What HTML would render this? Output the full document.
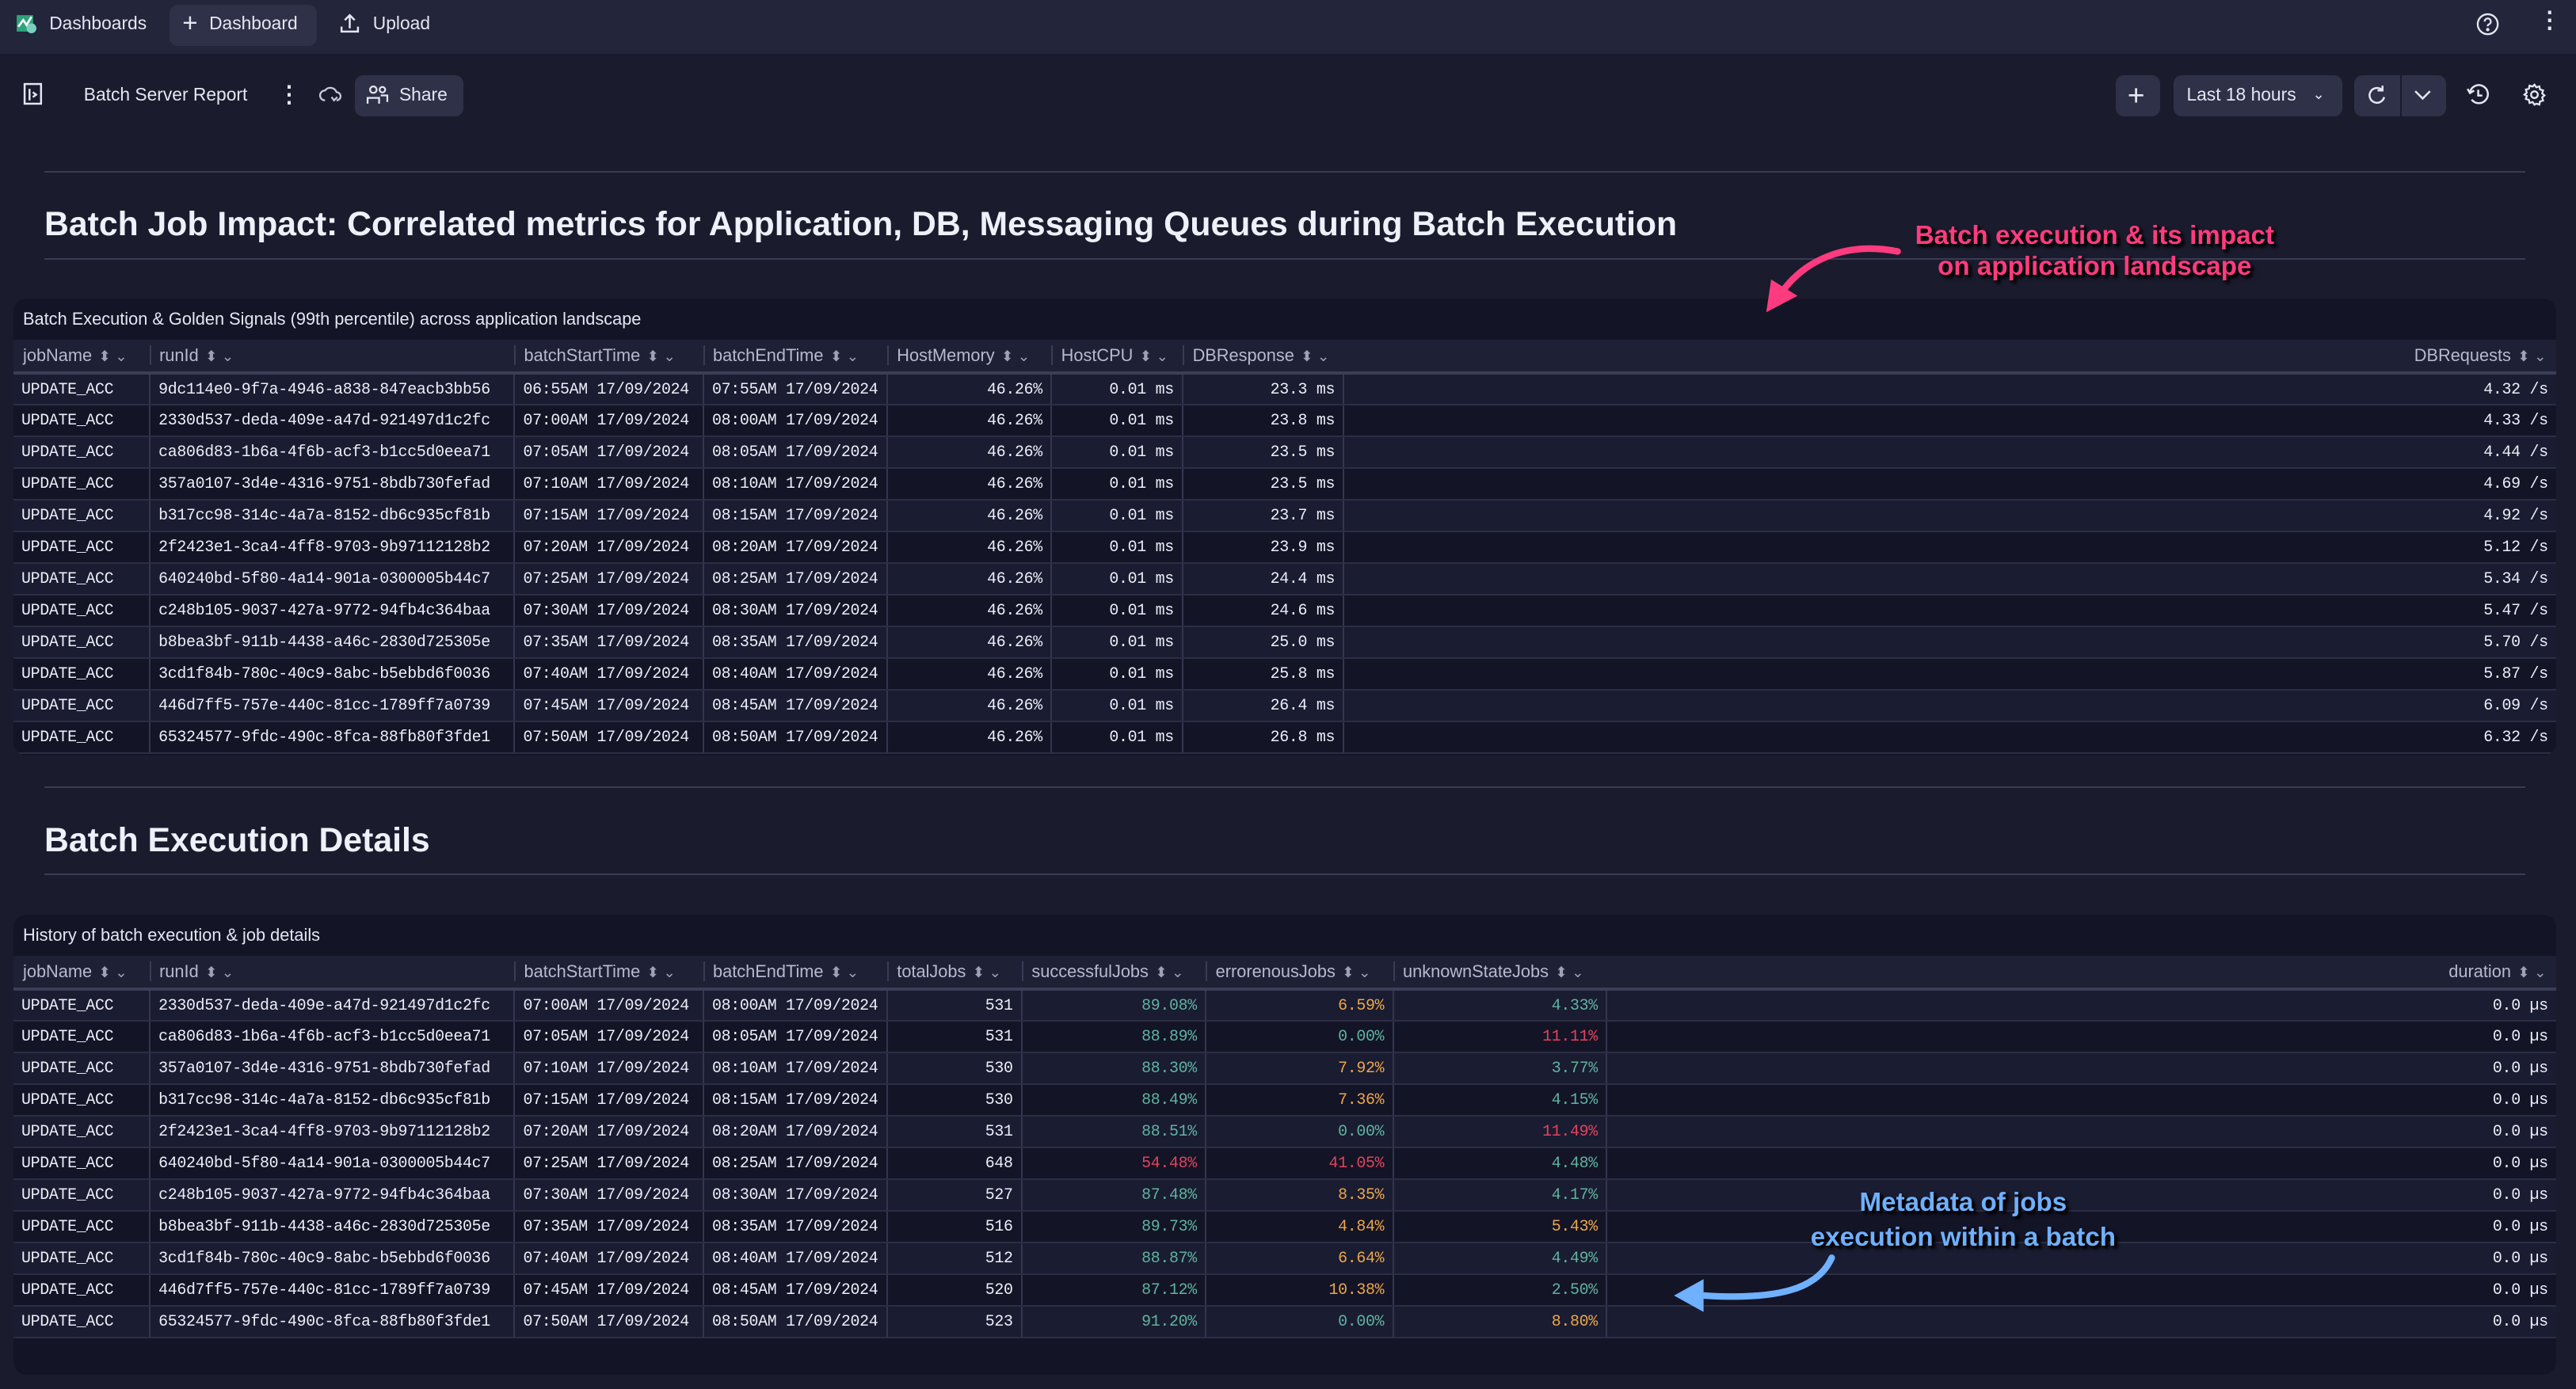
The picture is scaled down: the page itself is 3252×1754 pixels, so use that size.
<!DOCTYPE html>
<html><head><meta charset="utf-8"><style>
*{box-sizing:border-box;margin:0;padding:0}
html,body{width:3252px;height:1754px;overflow:hidden;background:#1a1b2d}
#w{zoom:2.07398;width:1568px;height:846px;position:relative;font-family:"Liberation Sans",sans-serif;color:#e4e6f2}
.top{position:absolute;left:0;top:0;width:1568px;height:33px;background:#23253a}
.ab{position:absolute;font-size:11px;color:#e4e6f2;display:flex;align-items:center}
.btn{position:absolute;background:#2f3148;border-radius:5px}
.hr{position:absolute;left:27px;width:1510px;height:1px;background:#3a3c55}
h1{position:absolute;left:27px;font-size:20.6px;font-weight:bold;color:#eef0fa}
.panel{position:absolute;left:8px;width:1548px;background:#131426;border-radius:8px;overflow:hidden}
.pt{position:absolute;left:6px;top:6px;font-size:10.5px;color:#e4e6f2}
table{position:absolute;left:0;width:1548px;border-collapse:collapse;table-layout:fixed}
th{height:20px;background:#1e2035;font-weight:normal;font-size:10.5px;color:#b6b9d0;text-align:left;padding-left:6px;border-bottom:2px solid #3c3e58;white-space:nowrap;overflow:hidden}
th span{position:relative;padding-left:5px;border-left:1px solid #3a3c55;margin-left:-6px}
th:first-child span{border:0;padding-left:0;margin-left:0}
th.r{text-align:right;padding-right:6px}
td{height:19.3px;font-family:"Liberation Mono",monospace;font-size:9.6px;letter-spacing:-0.15px;color:#eceef8;padding:0 5px;white-space:nowrap;overflow:hidden;border-bottom:1px solid #2c2e45;border-right:1px solid #34364f}
td:last-child{border-right:0}
td.r{text-align:right}
tr:nth-child(even) td{background:#1a1c31}
.g{color:#5fb3a0}.o{color:#eba64b}.rd{color:#e3435c}
.s{font-size:9px;color:#9ea1b8;margin-left:4px;font-style:normal}
.ann{position:absolute;font-family:"Liberation Sans",sans-serif;font-weight:bold;font-size:16px;line-height:19px;text-align:center;text-shadow:1px 1px 1px #000,2px 2px 2px #000}
</style></head><body><div id="w">
<div class="top"></div>
<div class="ab" style="left:9px;top:7px"><svg width="14" height="14" viewBox="0 0 14 14"><rect x="1" y="2" width="10" height="10" fill="#2fa37a"/><path d="M2 9l3-4 2 3 3-5" stroke="#fff" stroke-width="1.3" fill="none"/><circle cx="10" cy="10" r="3" fill="#7ad0c0"/></svg><span style="margin-left:7px">Dashboards</span></div>
<div class="btn" style="left:103px;top:3px;width:90px;height:25px"></div>
<div class="ab" style="left:111px;top:7px"><span style="font-size:16px;margin-right:7px;line-height:14px">+</span>Dashboard</div>
<div class="ab" style="left:206px;top:7px"><svg width="14" height="14" viewBox="0 0 14 14" fill="none" stroke="#e4e6f2" stroke-width="1.2"><path d="M7 10V2M4 5l3-3 3 3M2 9v3h10V9"/></svg><span style="margin-left:7px">Upload</span></div>
<svg style="position:absolute;left:1507px;top:7px" width="15" height="15" viewBox="0 0 16 16" fill="none" stroke="#e4e6f2" stroke-width="1.2"><circle cx="8" cy="8" r="6.5"/><path d="M6 6.3a2 2 0 1 1 2.6 1.9c-.5.2-.6.6-.6 1.2"/><circle cx="8" cy="11.5" r=".5" fill="#e4e6f2"/></svg>
<div class="ab" style="left:1545px;top:6px;font-size:14px;font-weight:bold;line-height:14px">⋮</div>

<svg style="position:absolute;left:14px;top:50px" width="13" height="15" viewBox="0 0 13 15" fill="none" stroke="#e4e6f2" stroke-width="1.2"><rect x="1" y="1" width="10" height="12"/><path d="M4 4v7M6 6l2 1.5L6 9"/></svg>
<div class="ab" style="left:51px;top:51px">Batch Server Report</div>
<div class="ab" style="left:169px;top:49px;font-size:14px;font-weight:bold">⋮</div>
<svg style="position:absolute;left:194px;top:51px" width="14" height="13" viewBox="0 0 14 13" fill="none" stroke="#c8cadc" stroke-width="1.1"><path d="M4 10a3 3 0 0 1 0-6 4 4 0 0 1 7 1 2.5 2.5 0 0 1 0 5M8 8l1.5 2 2-2"/></svg>
<div class="btn" style="left:216px;top:46px;width:66px;height:25px"></div>
<div class="ab" style="left:223px;top:51px"><svg width="14" height="13" viewBox="0 0 14 13" fill="none" stroke="#e4e6f2" stroke-width="1.1"><circle cx="4.5" cy="3.5" r="2"/><circle cx="10" cy="3.5" r="1.7"/><path d="M1 12V8.5h7V12M9 7h4v4"/></svg><span style="margin-left:6px">Share</span></div>

<div class="btn" style="left:1288px;top:46px;width:27px;height:25px"></div>
<div class="ab" style="left:1295px;top:48px;font-size:18px;line-height:20px">+</div>
<div class="btn" style="left:1323px;top:46px;width:103px;height:25px"></div>
<div class="ab" style="left:1331px;top:51px">Last 18 hours<span style="margin-left:10px;font-size:9px">⌄</span></div>
<div class="btn" style="left:1433px;top:46px;width:56px;height:25px"></div>
<div style="position:absolute;left:1461px;top:46px;width:1px;height:25px;background:#1a1b2d"></div>
<svg style="position:absolute;left:1440px;top:51px" width="13" height="14" viewBox="0 0 13 14" fill="none" stroke="#e4e6f2" stroke-width="1.2"><path d="M10 4a4.5 4.5 0 1 0 1 4M10 1v3H7"/></svg>
<svg style="position:absolute;left:1469px;top:54px" width="11" height="8" viewBox="0 0 11 8" fill="none" stroke="#e4e6f2" stroke-width="1.2"><path d="M1 1.5l4.5 4.5 4.5-4.5"/></svg>
<svg style="position:absolute;left:1501px;top:50px" width="15" height="15" viewBox="0 0 15 15" fill="none" stroke="#e4e6f2" stroke-width="1.2"><path d="M2.5 6a5.5 5.5 0 1 1 1 4.5M1 4l1.5 2.5L5 5M7.5 4.5v3.5h2.5"/></svg>
<svg style="position:absolute;left:1535px;top:50px" width="15" height="15" viewBox="0 0 16 16" fill="none" stroke="#e4e6f2" stroke-width="1.2"><circle cx="8" cy="8" r="2.2"/><path d="M8 1.5l1.2 1.7 2-.6.4 2 2 .6-.6 2 1.5 1.3-1.5 1.3.6 2-2 .6-.4 2-2-.6L8 14.5l-1.2-1.7-2 .6-.4-2-2-.6.6-2L1.5 8 3 6.7l-.6-2 2-.6.4-2 2 .6z"/></svg>

<div class="hr" style="top:104px"></div>
<h1 style="top:125px">Batch Job Impact: Correlated metrics for Application, DB, Messaging Queues during Batch Execution</h1>
<div class="hr" style="top:157px"></div>

<div class="panel" style="top:182px;height:278px">
<div class="pt">Batch Execution &amp; Golden Signals (99th percentile) across application landscape</div>
<table style="top:25px">
<colgroup><col style="width:83px"><col style="width:222px"><col style="width:115px"><col style="width:112px"><col style="width:100px"><col style="width:80px"><col style="width:98px"><col></colgroup>
<tr><th><span>jobName<i class="s">⬍ ⌄</i></span></th><th><span>runId<i class="s">⬍ ⌄</i></span></th><th><span>batchStartTime<i class="s">⬍ ⌄</i></span></th><th><span>batchEndTime<i class="s">⬍ ⌄</i></span></th><th><span>HostMemory<i class="s">⬍ ⌄</i></span></th><th><span>HostCPU<i class="s">⬍ ⌄</i></span></th><th><span>DBResponse<i class="s">⬍ ⌄</i></span></th><th class="r"><span style="border:0">DBRequests<i class="s">⬍ ⌄</i></span></th></tr>
<tr><td>UPDATE_ACC</td><td>9dc114e0-9f7a-4946-a838-847eacb3bb56</td><td>06:55AM 17/09/2024</td><td>07:55AM 17/09/2024</td><td class="r">46.26%</td><td class="r">0.01 ms</td><td class="r">23.3 ms</td><td class="r">4.32 /s</td></tr>
<tr><td>UPDATE_ACC</td><td>2330d537-deda-409e-a47d-921497d1c2fc</td><td>07:00AM 17/09/2024</td><td>08:00AM 17/09/2024</td><td class="r">46.26%</td><td class="r">0.01 ms</td><td class="r">23.8 ms</td><td class="r">4.33 /s</td></tr>
<tr><td>UPDATE_ACC</td><td>ca806d83-1b6a-4f6b-acf3-b1cc5d0eea71</td><td>07:05AM 17/09/2024</td><td>08:05AM 17/09/2024</td><td class="r">46.26%</td><td class="r">0.01 ms</td><td class="r">23.5 ms</td><td class="r">4.44 /s</td></tr>
<tr><td>UPDATE_ACC</td><td>357a0107-3d4e-4316-9751-8bdb730fefad</td><td>07:10AM 17/09/2024</td><td>08:10AM 17/09/2024</td><td class="r">46.26%</td><td class="r">0.01 ms</td><td class="r">23.5 ms</td><td class="r">4.69 /s</td></tr>
<tr><td>UPDATE_ACC</td><td>b317cc98-314c-4a7a-8152-db6c935cf81b</td><td>07:15AM 17/09/2024</td><td>08:15AM 17/09/2024</td><td class="r">46.26%</td><td class="r">0.01 ms</td><td class="r">23.7 ms</td><td class="r">4.92 /s</td></tr>
<tr><td>UPDATE_ACC</td><td>2f2423e1-3ca4-4ff8-9703-9b97112128b2</td><td>07:20AM 17/09/2024</td><td>08:20AM 17/09/2024</td><td class="r">46.26%</td><td class="r">0.01 ms</td><td class="r">23.9 ms</td><td class="r">5.12 /s</td></tr>
<tr><td>UPDATE_ACC</td><td>640240bd-5f80-4a14-901a-0300005b44c7</td><td>07:25AM 17/09/2024</td><td>08:25AM 17/09/2024</td><td class="r">46.26%</td><td class="r">0.01 ms</td><td class="r">24.4 ms</td><td class="r">5.34 /s</td></tr>
<tr><td>UPDATE_ACC</td><td>c248b105-9037-427a-9772-94fb4c364baa</td><td>07:30AM 17/09/2024</td><td>08:30AM 17/09/2024</td><td class="r">46.26%</td><td class="r">0.01 ms</td><td class="r">24.6 ms</td><td class="r">5.47 /s</td></tr>
<tr><td>UPDATE_ACC</td><td>b8bea3bf-911b-4438-a46c-2830d725305e</td><td>07:35AM 17/09/2024</td><td>08:35AM 17/09/2024</td><td class="r">46.26%</td><td class="r">0.01 ms</td><td class="r">25.0 ms</td><td class="r">5.70 /s</td></tr>
<tr><td>UPDATE_ACC</td><td>3cd1f84b-780c-40c9-8abc-b5ebbd6f0036</td><td>07:40AM 17/09/2024</td><td>08:40AM 17/09/2024</td><td class="r">46.26%</td><td class="r">0.01 ms</td><td class="r">25.8 ms</td><td class="r">5.87 /s</td></tr>
<tr><td>UPDATE_ACC</td><td>446d7ff5-757e-440c-81cc-1789ff7a0739</td><td>07:45AM 17/09/2024</td><td>08:45AM 17/09/2024</td><td class="r">46.26%</td><td class="r">0.01 ms</td><td class="r">26.4 ms</td><td class="r">6.09 /s</td></tr>
<tr><td>UPDATE_ACC</td><td>65324577-9fdc-490c-8fca-88fb80f3fde1</td><td>07:50AM 17/09/2024</td><td>08:50AM 17/09/2024</td><td class="r">46.26%</td><td class="r">0.01 ms</td><td class="r">26.8 ms</td><td class="r">6.32 /s</td></tr>
</table></div>

<div class="hr" style="top:479px"></div>
<h1 style="top:500px">Batch Execution Details</h1>
<div class="hr" style="top:532px"></div>

<div class="panel" style="top:557px;height:280px">
<div class="pt">History of batch execution &amp; job details</div>
<table style="top:25px">
<colgroup><col style="width:83px"><col style="width:222px"><col style="width:115px"><col style="width:112px"><col style="width:82px"><col style="width:112px"><col style="width:114px"><col style="width:130px"><col></colgroup>
<tr><th><span>jobName<i class="s">⬍ ⌄</i></span></th><th><span>runId<i class="s">⬍ ⌄</i></span></th><th><span>batchStartTime<i class="s">⬍ ⌄</i></span></th><th><span>batchEndTime<i class="s">⬍ ⌄</i></span></th><th><span>totalJobs<i class="s">⬍ ⌄</i></span></th><th><span>successfulJobs<i class="s">⬍ ⌄</i></span></th><th><span>errorenousJobs<i class="s">⬍ ⌄</i></span></th><th><span>unknownStateJobs<i class="s">⬍ ⌄</i></span></th><th class="r"><span style="border:0">duration<i class="s">⬍ ⌄</i></span></th></tr>
<tr><td>UPDATE_ACC</td><td>2330d537-deda-409e-a47d-921497d1c2fc</td><td>07:00AM 17/09/2024</td><td>08:00AM 17/09/2024</td><td class="r">531</td><td class="r g">89.08%</td><td class="r o">6.59%</td><td class="r g">4.33%</td><td class="r">0.0 µs</td></tr>
<tr><td>UPDATE_ACC</td><td>ca806d83-1b6a-4f6b-acf3-b1cc5d0eea71</td><td>07:05AM 17/09/2024</td><td>08:05AM 17/09/2024</td><td class="r">531</td><td class="r g">88.89%</td><td class="r g">0.00%</td><td class="r rd">11.11%</td><td class="r">0.0 µs</td></tr>
<tr><td>UPDATE_ACC</td><td>357a0107-3d4e-4316-9751-8bdb730fefad</td><td>07:10AM 17/09/2024</td><td>08:10AM 17/09/2024</td><td class="r">530</td><td class="r g">88.30%</td><td class="r o">7.92%</td><td class="r g">3.77%</td><td class="r">0.0 µs</td></tr>
<tr><td>UPDATE_ACC</td><td>b317cc98-314c-4a7a-8152-db6c935cf81b</td><td>07:15AM 17/09/2024</td><td>08:15AM 17/09/2024</td><td class="r">530</td><td class="r g">88.49%</td><td class="r o">7.36%</td><td class="r g">4.15%</td><td class="r">0.0 µs</td></tr>
<tr><td>UPDATE_ACC</td><td>2f2423e1-3ca4-4ff8-9703-9b97112128b2</td><td>07:20AM 17/09/2024</td><td>08:20AM 17/09/2024</td><td class="r">531</td><td class="r g">88.51%</td><td class="r g">0.00%</td><td class="r rd">11.49%</td><td class="r">0.0 µs</td></tr>
<tr><td>UPDATE_ACC</td><td>640240bd-5f80-4a14-901a-0300005b44c7</td><td>07:25AM 17/09/2024</td><td>08:25AM 17/09/2024</td><td class="r">648</td><td class="r rd">54.48%</td><td class="r rd">41.05%</td><td class="r g">4.48%</td><td class="r">0.0 µs</td></tr>
<tr><td>UPDATE_ACC</td><td>c248b105-9037-427a-9772-94fb4c364baa</td><td>07:30AM 17/09/2024</td><td>08:30AM 17/09/2024</td><td class="r">527</td><td class="r g">87.48%</td><td class="r o">8.35%</td><td class="r g">4.17%</td><td class="r">0.0 µs</td></tr>
<tr><td>UPDATE_ACC</td><td>b8bea3bf-911b-4438-a46c-2830d725305e</td><td>07:35AM 17/09/2024</td><td>08:35AM 17/09/2024</td><td class="r">516</td><td class="r g">89.73%</td><td class="r o">4.84%</td><td class="r o">5.43%</td><td class="r">0.0 µs</td></tr>
<tr><td>UPDATE_ACC</td><td>3cd1f84b-780c-40c9-8abc-b5ebbd6f0036</td><td>07:40AM 17/09/2024</td><td>08:40AM 17/09/2024</td><td class="r">512</td><td class="r g">88.87%</td><td class="r o">6.64%</td><td class="r g">4.49%</td><td class="r">0.0 µs</td></tr>
<tr><td>UPDATE_ACC</td><td>446d7ff5-757e-440c-81cc-1789ff7a0739</td><td>07:45AM 17/09/2024</td><td>08:45AM 17/09/2024</td><td class="r">520</td><td class="r g">87.12%</td><td class="r o">10.38%</td><td class="r g">2.50%</td><td class="r">0.0 µs</td></tr>
<tr><td>UPDATE_ACC</td><td>65324577-9fdc-490c-8fca-88fb80f3fde1</td><td>07:50AM 17/09/2024</td><td>08:50AM 17/09/2024</td><td class="r">523</td><td class="r g">91.20%</td><td class="r g">0.00%</td><td class="r o">8.80%</td><td class="r">0.0 µs</td></tr>
</table></div>

<div class="ann" style="left:1150px;top:134px;width:250px;color:#ff3b80">Batch execution &amp; its impact<br>on application landscape</div>
<svg style="position:absolute;left:1065px;top:145px" width="100" height="50" viewBox="0 0 100 50"><path d="M90 8C60 2 35 12 20 32" stroke="#ff3b80" stroke-width="4" fill="none" stroke-linecap="round"/><path d="M10 45L13 25 29 35z" fill="#ff3b80"/></svg>
<div class="ann" style="left:1080px;top:722px;width:230px;color:#6fb0ff;line-height:21px">Metadata of jobs<br>execution within a batch</div>
<svg style="position:absolute;left:1015px;top:762px" width="110" height="40" viewBox="0 0 110 40"><path d="M100 4C92 22 70 30 22 27" stroke="#6fb0ff" stroke-width="4" fill="none" stroke-linecap="round"/><path d="M4 27L22 17 22 37z" fill="#6fb0ff"/></svg>
</div></body></html>
